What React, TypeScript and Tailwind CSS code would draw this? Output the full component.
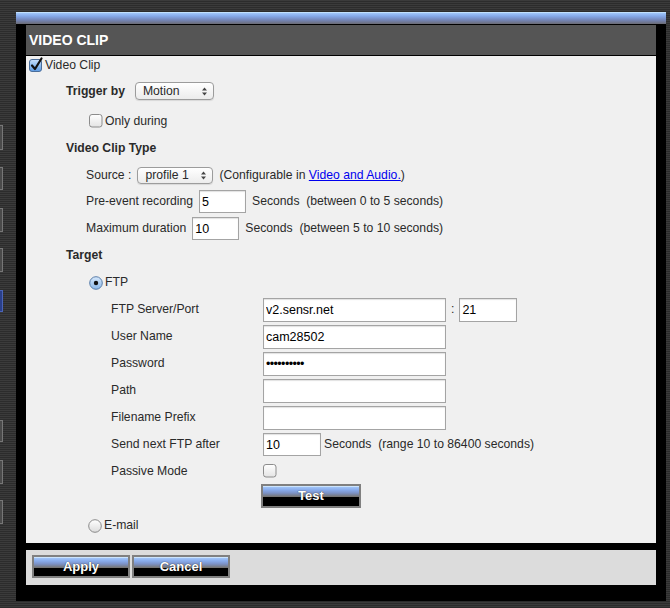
import React from "react";

function CheckBox({ checked }: { checked?: boolean }) {
  if (checked) {
    return (
      <svg width="14" height="14" viewBox="0 0 14 14" className="overflow-visible shrink-0">
        <defs>
          <linearGradient id="cbBlue" x1="0" y1="0" x2="0" y2="1">
            <stop offset="0" stopColor="#c9e0fb" />
            <stop offset="0.5" stopColor="#8fbdf0" />
            <stop offset="1" stopColor="#5c9ae2" />
          </linearGradient>
        </defs>
        <rect x="0.5" y="1.5" width="12" height="12" rx="2.5" fill="url(#cbBlue)" stroke="#4b6e9b" />
        <path d="M3 7.5 L6 11 L12.5 0.5" fill="none" stroke="#111" strokeWidth="2.2" strokeLinecap="round" strokeLinejoin="round" />
      </svg>
    );
  }
  return (
    <svg width="14" height="14" viewBox="0 0 14 14" className="shrink-0">
      <defs>
        <linearGradient id="cbWhite" x1="0" y1="0" x2="0" y2="1">
          <stop offset="0" stopColor="#ffffff" />
          <stop offset="1" stopColor="#e4e4e4" />
        </linearGradient>
      </defs>
      <rect x="0.5" y="0.5" width="12.5" height="12.5" rx="2.5" fill="url(#cbWhite)" stroke="#8c8c8c" />
    </svg>
  );
}

function Radio({ selected }: { selected?: boolean }) {
  return (
    <svg width="14" height="14" viewBox="0 0 14 14" className="shrink-0">
      <defs>
        <linearGradient id="rdBlue" x1="0" y1="0" x2="0" y2="1">
          <stop offset="0" stopColor="#d6e8fb" />
          <stop offset="1" stopColor="#8ab7e8" />
        </linearGradient>
        <linearGradient id="rdWhite" x1="0" y1="0" x2="0" y2="1">
          <stop offset="0" stopColor="#ffffff" />
          <stop offset="1" stopColor="#dcdcdc" />
        </linearGradient>
      </defs>
      <circle cx="7" cy="7" r="6.3" fill={selected ? "url(#rdBlue)" : "url(#rdWhite)"} stroke={selected ? "#5a7ea9" : "#8a8a8a"} />
      {selected && <circle cx="7" cy="7" r="2.2" fill="#111" />}
    </svg>
  );
}

function Arrows() {
  return (
    <svg width="5" height="9" viewBox="0 0 5 9" className="shrink-0">
      <path d="M0 3.5 L2.5 0.5 L5 3.5 Z" fill="#444" />
      <path d="M0 5.5 L2.5 8.5 L5 5.5 Z" fill="#444" />
    </svg>
  );
}

function BlueButton({ label }: { label: string }) {
  return (
    <div className="w-full h-full border-2 border-[#808080] bg-[linear-gradient(to_bottom,#e4f6ff_0px,#9cc0f6_1.5px,#88abeb_4px,#7c92c6_7px,#767676_10.5px,#707070_11px,#000_11px,#000_100%)] flex items-center justify-center text-white font-bold text-[13px] [text-shadow:0_0_1px_#000]">
      {label}
    </div>
  );
}

const inputCls =
  "bg-white border border-[#a4a4a4] shadow-[inset_0_1px_1px_rgba(0,0,0,0.12)] px-[2px] text-[12.5px] text-black outline-none";

export default function App() {
  return (
    <div className="w-[670px] h-[608px] flex bg-[repeating-linear-gradient(to_bottom,#3b3b3b_0px,#3b3b3b_1px,#2c2c2c_1px,#2c2c2c_2px)] font-['Liberation_Sans',Arial,sans-serif] text-[#2a2a2a] overflow-hidden">
      {/* left strip with partially visible nav buttons */}
      <div className="w-[16px] shrink-0 flex flex-col pt-[125px]">
        <div className="w-[3px] h-[25px] bg-[#4a4a4a] border-y border-r border-[#777]" />
        <div className="w-[3px] h-[23px] mt-[17px] bg-[#4a4a4a] border-y border-r border-[#777]" />
        <div className="w-[3px] h-[24px] mt-[18px] bg-[#4a4a4a] border-y border-r border-[#777]" />
        <div className="w-[3px] h-[24px] mt-[16px] bg-[#4a4a4a] border-y border-r border-[#777]" />
        <div className="w-[3px] h-[22px] mt-[18px] bg-[#2a3f8a] border-y border-r border-[#4a64b8]" />
        <div className="w-[3px] h-[22px] mt-[108px] bg-[#4a4a4a] border-y border-r border-[#777]" />
        <div className="w-[3px] h-[24px] mt-[18px] bg-[#4a4a4a] border-y border-r border-[#777]" />
        <div className="w-[3px] h-[24px] mt-[16px] bg-[#4a4a4a] border-y border-r border-[#777]" />
      </div>

      <div className="w-[650px] shrink-0 flex flex-col pt-[12px]">
        {/* blue bar */}
        <div className="h-[12px] bg-[linear-gradient(to_bottom,#d4f0ff_0px,#9cc2f7_1.5px,#86aaea_4px,#7486b8_8px,#6c6c74_12px)]" />
        {/* black frame */}
        <div className="bg-black px-[10px] pt-[1px] pb-[16px] flex flex-col">
          <div className="h-[30px] bg-[#555555] flex items-center pl-[3px] text-white font-bold text-[14px]">
            VIDEO CLIP
          </div>
          <div className="h-[1px]" />
          <div className="h-[487px] bg-[#f0f0f0] flex flex-col text-[12.2px]">
            <div className="h-[18px] flex items-center pl-[3px] gap-[2px]">
              <CheckBox checked />
              <span>Video Clip</span>
            </div>
            <div className="h-[34px] flex items-center pl-[40px]">
              <span className="font-bold">Trigger by</span>
              <div className="ml-[10px] w-[79px] h-[18px] rounded-[4px] border border-[#9c9c9c] bg-[linear-gradient(to_bottom,#ffffff,#ececec)] shadow-[0_1px_1px_rgba(0,0,0,0.1)] flex items-center justify-between pl-[7px] pr-[6px]">
                <span>Motion</span>
                <Arrows />
              </div>
            </div>
            <div className="h-[26px] flex items-center pl-[63px] gap-[2px]">
              <CheckBox />
              <span>Only during</span>
            </div>
            <div className="h-[28px] flex items-center pl-[40px] font-bold">Video Clip Type</div>
            <div className="h-[26px] flex items-center pl-[60px]">
              <span>Source :</span>
              <div className="ml-[6px] w-[76px] h-[17px] rounded-[4px] border border-[#9c9c9c] bg-[linear-gradient(to_bottom,#ffffff,#ececec)] shadow-[0_1px_1px_rgba(0,0,0,0.1)] flex items-center justify-between pl-[7px] pr-[6px]">
                <span>profile 1</span>
                <Arrows />
              </div>
              <span className="ml-[6px]">
                (Configurable in <span className="text-[#0000ee] underline">Video and Audio.</span>)
              </span>
            </div>
            <div className="h-[27px] flex items-center pl-[60px]">
              <span>Pre-event recording</span>
              <input readOnly value="5" className={"ml-[6px] w-[47px] h-[23px] " + inputCls} />
              <span className="ml-[6px] whitespace-pre">Seconds  (between 0 to 5 seconds)</span>
            </div>
            <div className="h-[27px] flex items-center pl-[60px]">
              <span>Maximum duration</span>
              <input readOnly value="10" className={"ml-[6px] w-[47px] h-[23px] " + inputCls} />
              <span className="ml-[6px] whitespace-pre">Seconds  (between 5 to 10 seconds)</span>
            </div>
            <div className="h-[27px] flex items-center pl-[40px] font-bold">Target</div>
            <div className="h-[27px] flex items-center pl-[63px] gap-[2px]">
              <Radio selected />
              <span>FTP</span>
            </div>

            <div className="h-[27px] flex items-center pl-[85px]">
              <span className="w-[152px]">FTP Server/Port</span>
              <input readOnly value="v2.sensr.net" className={"w-[183px] h-[24px] " + inputCls} />
              <span className="ml-[5px]">:</span>
              <input readOnly value="21" className={"ml-[5px] w-[58px] h-[24px] " + inputCls} />
            </div>
            <div className="h-[27px] flex items-center pl-[85px]">
              <span className="w-[152px]">User Name</span>
              <input readOnly value="cam28502" className={"w-[183px] h-[24px] " + inputCls} />
            </div>
            <div className="h-[27px] flex items-center pl-[85px]">
              <span className="w-[152px]">Password</span>
              <input readOnly value="••••••••••" className={"w-[183px] h-[24px] tracking-[-0.6px] " + inputCls} />
            </div>
            <div className="h-[27px] flex items-center pl-[85px]">
              <span className="w-[152px]">Path</span>
              <input readOnly value="" className={"w-[183px] h-[24px] " + inputCls} />
            </div>
            <div className="h-[27px] flex items-center pl-[85px]">
              <span className="w-[152px]">Filename Prefix</span>
              <input readOnly value="" className={"w-[183px] h-[24px] " + inputCls} />
            </div>
            <div className="h-[27px] flex items-center pl-[85px]">
              <span className="w-[152px]">Send next FTP after</span>
              <input readOnly value="10" className={"w-[58px] h-[23px] " + inputCls} />
              <span className="ml-[3px] whitespace-pre">Seconds  (range 10 to 86400 seconds)</span>
            </div>
            <div className="h-[26px] flex items-center pl-[85px]">
              <span className="w-[152px]">Passive Mode</span>
              <CheckBox />
            </div>
            <div className="h-[24px] flex pl-[235px]">
              <div className="w-[100px] h-[24px]">
                <BlueButton label="Test" />
              </div>
            </div>
            <div className="h-[35px] flex items-center pl-[62px] gap-[2px]">
              <Radio />
              <span>E-mail</span>
            </div>
          </div>
          <div className="h-[7px]" />
          <div className="h-[35px] bg-[#dcdcdc] flex items-start pt-[5px] pl-[6px] gap-[2px]">
            <div className="w-[98px] h-[23px]">
              <BlueButton label="Apply" />
            </div>
            <div className="w-[98px] h-[23px]">
              <BlueButton label="Cancel" />
            </div>
          </div>
        </div>
      </div>
      <div className="w-[4px] shrink-0" />
    </div>
  );
}
